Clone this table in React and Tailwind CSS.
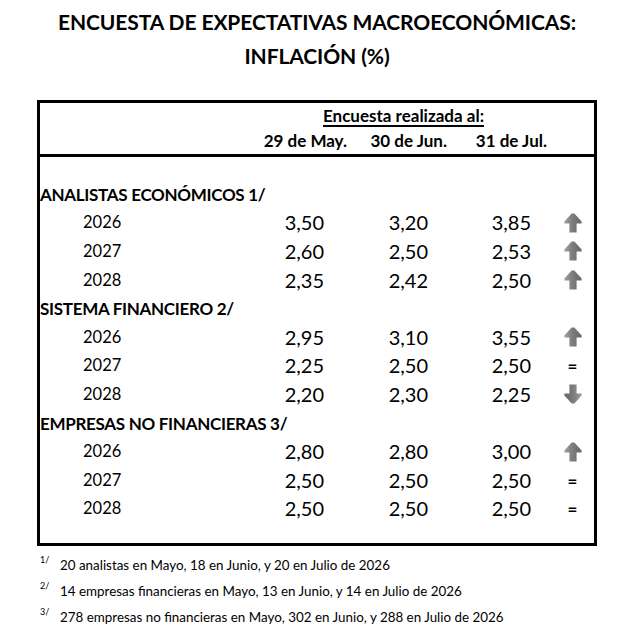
import React from 'react'

const font = {fontFamily: 'Lato, "Liberation Sans", sans-serif'}

const sections = [
    {
        title: 'ANALISTAS ECONÓMICOS 1/',
        rows: [
            ['2026', '3,50', '3,20', '3,85', 'up'],
            ['2027', '2,60', '2,50', '2,53', 'up'],
            ['2028', '2,35', '2,42', '2,50', 'up'],
        ],
    },
    {
        title: 'SISTEMA FINANCIERO 2/',
        rows: [
            ['2026', '2,95', '3,10', '3,55', 'up'],
            ['2027', '2,25', '2,50', '2,50', 'eq'],
            ['2028', '2,20', '2,30', '2,25', 'down'],
        ],
    },
    {
        title: 'EMPRESAS NO FINANCIERAS 3/',
        rows: [
            ['2026', '2,80', '2,80', '3,00', 'up'],
            ['2027', '2,50', '2,50', '2,50', 'eq'],
            ['2028', '2,50', '2,50', '2,50', 'eq'],
        ],
    },
]

const notes = [
    ['1/', '20 analistas en Mayo, 18 en Junio, y 20 en Julio de 2026'],
    ['2/', '14 empresas financieras en Mayo, 13 en Junio, y 14 en Julio de 2026'],
    ['3/', '278 empresas no financieras en Mayo, 302 en Junio, y 288 en Julio de 2026'],
]

function Arrow({dir}) {
    const id = 'g-' + dir
    return (
        <svg width="18" height="20" viewBox="0 0 18 20" className={dir === 'down' ? 'rotate-180' : ''}>
            <defs>
                <linearGradient id={id} x1="0" x2="1" y1="0" y2="0">
                    <stop offset="0" stopColor="#a0a0a0" />
                    <stop offset="0.45" stopColor="#7e7e7e" />
                    <stop offset="1" stopColor="#666666" />
                </linearGradient>
            </defs>
            <path d="M7.6 0.5 L10.4 0.5 L17.6 8.4 L17.6 10.4 L12.6 10.4 L12.6 19.5 L5.4 19.5 L5.4 10.4 L0.4 10.4 L0.4 8.4 Z" fill={`url(#${id})`} />
        </svg>
    )
}

function Trend({kind}) {
    if (kind === 'eq') {
        return <span className="w-[17px] text-center text-[17px] font-bold leading-none text-black">=</span>
    }
    return <Arrow dir={kind} />
}

export default function App() {
    return (
        <div className="w-[626px] h-[632px] bg-white text-black" style={font}>
            <div className="ml-[37px] w-[560px]">
                <div className="pt-[5px] text-center text-[21px] font-bold leading-[34px] tracking-[-0.1px]">
                    <div>ENCUESTA DE EXPECTATIVAS MACROECONÓMICAS:</div>
                    <div>INFLACIÓN (%)</div>
                </div>

                <div className="mt-[27px] border-[3px] border-black">
                    <div className="border-b-[3px] border-black">
                        <div className="h-[25px] pl-[283px] text-[17px] font-bold leading-[25px]">
                            <span className="underline underline-offset-[3px] decoration-[1.5px]">Encuesta realizada al:</span>
                        </div>
                        <div className="grid h-[26px] grid-cols-[307px_100px_100px] text-[17px] font-bold leading-[26px]">
                            <div className="text-right">29 de May.</div>
                            <div className="text-right">30 de Jun.</div>
                            <div className="text-right">31 de Jul.</div>
                        </div>
                    </div>

                    <div className="pt-[24px] pb-[19px]">
                        {sections.map((s) => (
                            <div key={s.title}>
                                <div className="h-[28.6px] text-[17px] font-bold leading-[28.6px] tracking-[-0.3px]">{s.title}</div>
                                {s.rows.map((r) => (
                                    <div key={r[0]} className="grid h-[28.6px] grid-cols-[200px_84px_104px_103px_1fr] items-center">
                                        <div className="pl-[43px] text-[16.5px] leading-[28px] -mt-[3px]">{r[0]}</div>
                                        <div className="text-right text-[20px] leading-[28px] -mt-[3px]">{r[1]}</div>
                                        <div className="text-right text-[20px] leading-[28px] -mt-[3px]">{r[2]}</div>
                                        <div className="text-right text-[20px] leading-[28px] -mt-[3px]">{r[3]}</div>
                                        <div className="flex pl-[33px] -mt-[2px]">
                                            <Trend kind={r[4]} />
                                        </div>
                                    </div>
                                ))}
                            </div>
                        ))}
                    </div>
                </div>

                <div className="mt-[6px] text-[13.4px]">
                    {notes.map(([sup, text]) => (
                        <div key={sup} className="flex h-[26px] items-center">
                            <span className="w-[23px] pl-[3px] -translate-y-[5px] text-[9px]">{sup}</span>
                            <span>{text}</span>
                        </div>
                    ))}
                </div>
            </div>
        </div>
    )
}
